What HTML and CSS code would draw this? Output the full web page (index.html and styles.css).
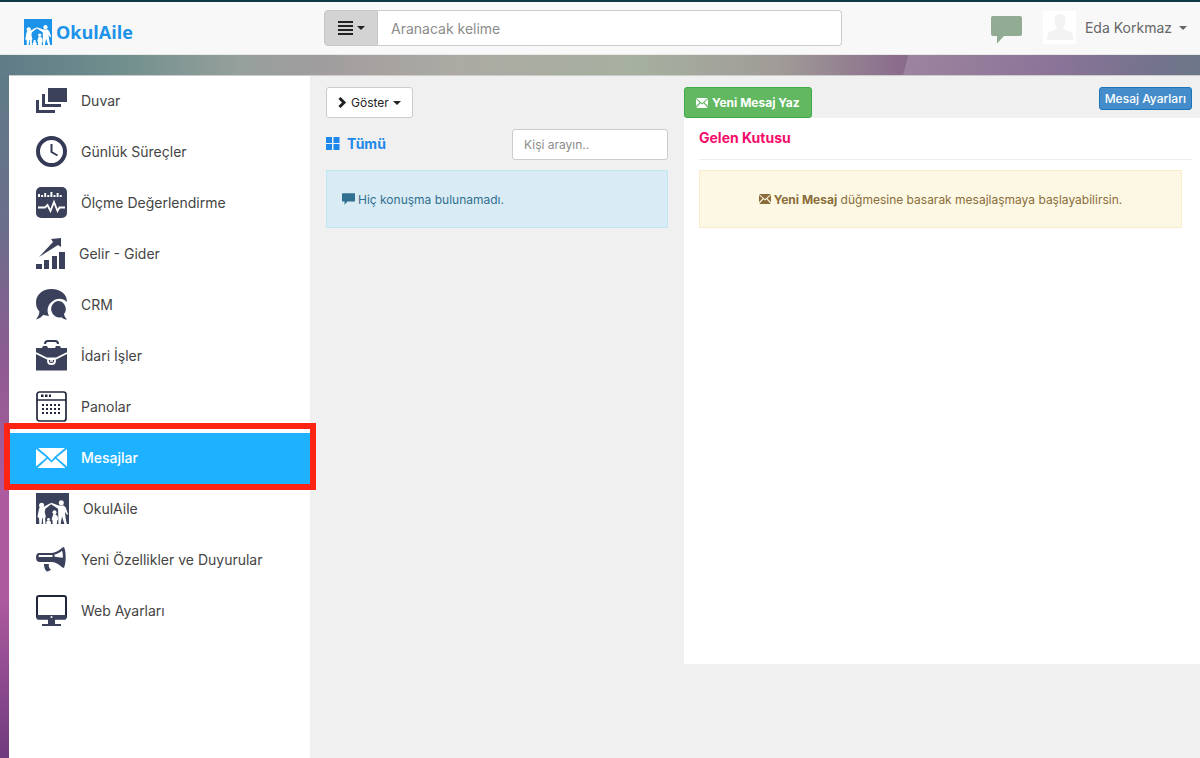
FILE: index.html
```html
<!DOCTYPE html>
<html lang="tr">
<head>
<meta charset="utf-8">
<meta name="viewport" content="width=device-width, initial-scale=1">
<title>OkulAile - Mesajlar</title>
<link rel="stylesheet" href="styles.css">
</head>
<body>
<svg class="defs" aria-hidden="true">
  <symbol id="family" viewBox="0 0 33 31">
    <path class="family-bg" d="M0 0h33v31H0z"/>
    <g fill="#fff">
      <circle cx="5.600" cy="12.200" r="2.500"/>
      <path d="M3.500 14.200 7.400 14l6.800-3.800.9 1-5.700 4.600-.7 3.200 1.300 5.200-.9.400L9.500 31H7.200l-.5-6h-.6l-.5 6H3.300l-.3-6.200-1.600-.5 1-5.500z"/>
      <circle cx="25.300" cy="9.800" r="2.500"/>
      <path d="m14.300 10.800 1-1 7.400 2.800h5l2 1.800 2.300 6.600-.8 1-2.200-3.300.5 5.500L30.800 31h-2.400l-2.400-7.500L24.600 31h-2.200l-.3-15.300z"/>
      <circle cx="18.500" cy="19.200" r="2"/>
      <path d="m17.300 21 2.500.2 2 2.200.2 3.600-.8.300-.4 3.700h-4.100l-.3-3.900-.8-.7z"/>
      <circle cx="12.500" cy="26.300" r="1.400"/>
      <path d="M11.400 27.500h2.300l1.200 1.500v2h-4.600v-2z"/>
    </g>
  </symbol>
  <symbol id="envelope" viewBox="0 0 12 10">
    <path fill="currentColor" d="M.2 0h11.600L6 5.300zM0 1.100 3.600 4.400 0 8.200zM12 1.100v7.100L8.400 4.400zM.2 10l4.200-4.800L6 6.600l1.600-1.400L11.800 10z"/>
  </symbol>
  <symbol id="bubble" viewBox="0 0 31 28">
    <path fill="currentColor" d="M2 0h27a2 2 0 0 1 2 2v16a2 2 0 0 1-2 2H13l-7 7.500V20H2a2 2 0 0 1-2-2V2a2 2 0 0 1 2-2z"/>
  </symbol>
</svg>

<header class="topbar">
  <a class="brand" href="#"><svg class="brand-mark" viewBox="0 0 33 31" preserveAspectRatio="none" aria-hidden="true"><use href="#family"/></svg><span>OkulAile</span></a>
  <form class="search">
    <button class="search-menu" type="button" aria-label="Arama seçenekleri">
      <svg width="15" height="14" viewBox="0 0 15 14" aria-hidden="true"><path d="M0 1h15M0 5h15M0 9h15M0 13h15" stroke="#222" stroke-width="2"/></svg><span class="caret"></span>
    </button>
    <input class="search-input" type="text" placeholder="Aranacak kelime" aria-label="Aranacak kelime">
  </form>
  <div class="user-area">
    <a class="notify" href="#" aria-label="Bildirimler"><svg width="31" height="28" aria-hidden="true"><use href="#bubble"/></svg></a>
    <a class="user" href="#">
      <svg class="avatar" viewBox="0 0 33 33" aria-hidden="true"><path fill="#f3f3f3" d="M4 29v-4c0-3 2-4 5-5l4-2c1-.5.600-2 0-3-1.500-1.500-1.500-3-1.500-6C11.500 5 13.500 3 17 3s5.500 2 5.500 6c0 3 0 4.500-1.500 6-.6 1-1 2.500 0 3l4 2c3 1 5 2 5 5v4z"/></svg>
      <span>Eda Korkmaz</span><span class="caret"></span>
    </a>
  </div>
</header>

<div class="shell">
  <nav class="sidebar">
    <a class="item" href="#"><svg width="31" height="31" viewBox="0 0 31 31" aria-hidden="true"><path class="ink" d="M12 3h19v14H12zM6 9h3v10h16v3H6zM0 15h3v10h16v3H0z"/></svg><span>Duvar</span></a>
    <a class="item" href="#"><svg width="31" height="31" viewBox="0 0 31 31" aria-hidden="true"><circle class="line" cx="15.500" cy="15.500" r="13.500" stroke-width="4"/><path class="line" d="M15.500 8v8l6 3.500" stroke-width="2"/></svg><span>Günlük Süreçler</span></a>
    <a class="item" href="#"><svg width="31" height="31" viewBox="0 0 31 31" aria-hidden="true"><rect class="ink" width="31" height="31" rx="5"/><path d="M3 10V7M6.100 10V8M9.200 10V6M12.300 10V8M15.400 10V5M18.500 10V8M21.600 10V6M24.700 10V8" stroke="#fff" stroke-width="2"/><path d="M2 20.500h7l2.500-2.500 3 6 3.500-9 3.500 9 2-3.500H29" fill="none" stroke="#fff" stroke-width="1.800"/></svg><span>Ölçme Değerlendirme</span></a>
    <a class="item" href="#"><svg width="29" height="31" viewBox="0 0 29 31" aria-hidden="true"><path class="ink" d="M0 26h6v5H0zM8 22h5v9H8zM16 18h5v13h-5zM23 14h6v17h-6zM3 19 17 4l-2-3 10-1v9l-3-2z"/></svg><span>Gelir - Gider</span></a>
    <a class="item" href="#"><svg width="31" height="31" viewBox="0 0 31 31" aria-hidden="true"><path class="ink" d="M15.500 0C25 0 31 5.500 31 13c-4-4-10-4-14-1-5 3-7 9-4 15-2 0-4-.5-5.500-1.200C5.500 28 3 30 0 30.500 2 28 3.500 25 3.400 22.500 1 20 0 17 0 13.500 0 6 6 0 15.500 0z"/><path class="ink" d="M21.500 12a8 8 0 0 1 6.500 13c.3 2 1.500 4 3 5.500-2 0-4-.8-5.500-2.300A8.200 8.200 0 1 1 21.500 12z"/></svg><span>CRM</span></a>
    <a class="item" href="#"><svg width="31" height="31" viewBox="0 0 31 31" aria-hidden="true"><path class="line" d="M9 4c0-2 1-3 3-3h7c2 0 3 1 3 3" stroke-width="2"/><path class="ink" d="M0 8h6l1-2h4l1 2h7l1-2h4l1 2h6v22.500H0z"/><path d="m0 13 12 6h7l12-6M12 18.500h7v2.500a3 3 0 0 1-3 3h-1a3 3 0 0 1-3-3z" fill="none" stroke="#fff" stroke-width="1.800"/><path d="M14 21h3" stroke="#fff" stroke-width="1.500"/></svg><span>İdari İşler</span></a>
    <a class="item" href="#"><svg width="31" height="31" viewBox="0 0 31 31" aria-hidden="true"><rect class="line frame" x="1" y="1" width="29" height="29" rx="2.500" stroke-width="1.700"/><path class="line frame" d="M1 9h29" stroke-width="1.500"/><path class="line frame" d="M5 4.800h10" stroke-width="2.400" stroke-dasharray="2.500 1.500"/><path class="line frame" d="M6 14h18M6 18h18M6 22h18" stroke-width="2" stroke-dasharray="2 2"/></svg><span>Panolar</span></a>
    <a class="item active" href="#" aria-current="page"><svg width="31" height="20" viewBox="0 0 31 20" aria-hidden="true"><path fill="#fff" d="M2 0h27L19 8.500l-3.500 4L12 8.500zM0 1l10.500 8.600L0 18.500zM31 1v17.500L20.500 9.600zM1.500 20l10-9.300 4 3.800 4-3.800 10 9.300z"/></svg><span>Mesajlar</span><i class="highlight"></i></a>
    <a class="item" href="#"><svg width="33" height="31" viewBox="0 0 33 31" aria-hidden="true"><use href="#family"/></svg><span>OkulAile</span></a>
    <a class="item" href="#"><svg width="31" height="31" viewBox="0 0 31 31" aria-hidden="true"><path class="ink" d="M3 9h13c4-.5 8-3 10.500-5.500L28 3c2 4 2.500 15 0 21l-2-.8c-3-3-6-4.700-10-5.200H4C1 18 0 16 0 13.500S1 9 3 9z"/><path d="M3 11h13.500v2H2.500zM18.500 10.500c3-.7 5.500-2 7.500-3.800.8 2 1 4.500.8 7l-8.300-1z" fill="#fff"/><path class="ink" d="M8 20h5c-.8 2 0 4 2 6l-3.500 1.500C9 27 8 23 8 20z"/></svg><span>Yeni Özellikler ve Duyurular</span></a>
    <a class="item" href="#"><svg width="31" height="31" viewBox="0 0 31 31" aria-hidden="true"><rect class="line frame" x="1" y="1" width="29" height="22.500" rx="2" stroke-width="2"/><path class="ink" d="M1 20h29v4.500H1zM12 24h7v5h6v2H6v-2h6z"/><circle cx="15.500" cy="22" r="1" fill="#fff"/></svg><span>Web Ayarları</span></a>
  </nav>

  <main class="workspace">
    <section class="people">
      <button class="btn show" type="button"><svg width="9" height="11" viewBox="0 0 9 11" aria-hidden="true"><path d="m1.500 1 4.500 4.500L1.500 10" fill="none" stroke="#222" stroke-width="3"/></svg><span>Göster</span><span class="caret"></span></button>
      <div class="filter">
        <h2 class="all"><svg width="14" height="13" viewBox="0 0 14 13" aria-hidden="true"><path fill="currentColor" d="M0 0h6v6H0zM7.500 0h6v6h-6zM0 7h6v6H0zM7.500 7h6v6h-6z"/></svg><span>Tümü</span></h2>
        <input class="people-search" type="text" placeholder="Kişi arayın.." aria-label="Kişi arayın">
      </div>
      <p class="alert info"><svg width="13" height="12" aria-hidden="true"><use href="#bubble"/></svg><span>Hiç konuşma bulunamadı.</span></p>
    </section>
    <section class="messages">
      <div class="actions">
        <button class="btn compose" type="button"><svg width="12" height="10" aria-hidden="true"><use href="#envelope"/></svg><span>Yeni Mesaj Yaz</span></button>
        <button class="btn settings" type="button">Mesaj Ayarları</button>
      </div>
      <div class="inbox">
        <h1 class="inbox-title">Gelen Kutusu</h1>
        <p class="alert warning"><svg width="12" height="10" aria-hidden="true"><use href="#envelope"/></svg><span><strong>Yeni Mesaj</strong> düğmesine basarak mesajlaşmaya başlayabilirsin.</span></p>
      </div>
    </section>
  </main>
</div>
</body>
</html>
```

FILE: styles.css
```css
* { box-sizing: border-box; }

body {
  margin: 0;
  min-height: 100vh;
  display: flex;
  flex-direction: column;
  font-family: Inter, "Liberation Sans", sans-serif;
  font-size: 12px;
  color: #444;
  background:
    linear-gradient(105deg, transparent 877px, rgba(255, 255, 255, .16) 878px, transparent 1120px) 0 55px / 100% 21px no-repeat,
    linear-gradient(90deg, #5f7b87 0, #708f8d 10%, #96a09c 20%, #a19d9e 27%, #acaaa3 38%, #a6b0a0 53%, #a09b97 65%, #8a6c8c 75%, #826a91 88%, #6d7789 100%) 0 55px / 100% 21px no-repeat,
    linear-gradient(#5f7b87 75px, #6b6d8b 230px, #8d5b91 360px, #ad5a9f 490px, #ad5a9f 600px, #703a7e 758px);
}

a { color: inherit; text-decoration: none; }
svg { flex: none; }
button, input { font: inherit; }
.defs { position: absolute; width: 0; height: 0; }
.ink { fill: #3b415a; }
.line { fill: none; stroke: #343a55; }
.frame { stroke: #22263d; }
.family-bg { fill: var(--family, #3b415a); }

.caret {
  border: 4px solid transparent;
  border-top-color: currentColor;
  border-bottom: 0;
}

.topbar {
  display: grid;
  grid-template-columns: 300px minmax(0, 518px) 1fr;
  align-items: start;
  height: 55px;
  padding: 8px 13px 0 24px;
  background: #f8f8f8;
  border-top: 2px solid #0d3a45;
  border-bottom: 1px solid #e7e7e7;
}

.brand {
  --family: #1c92e8;
  display: flex;
  align-items: center;
  gap: 4px;
  height: 44px;
  font-family: "Open Sans", sans-serif;
  font-size: 18px;
  font-weight: 700;
  color: #1c92e8;
}
.brand-mark { width: 28px; height: 26px; }

.search { display: flex; height: 36px; }
.search-menu {
  display: flex;
  align-items: center;
  justify-content: center;
  gap: 4px;
  width: 54px;
  padding: 0;
  color: #222;
  background: #d3d3d3;
  border: 1px solid #c6c6c6;
  border-radius: 4px 0 0 4px;
}
.search-input {
  flex: 1;
  min-width: 0;
  padding: 0 13px;
  font-size: 14px;
  background: #fff;
  border: 1px solid #ccc;
  border-left: 0;
  border-radius: 0 4px 4px 0;
}
::placeholder { color: #8c8c8c; opacity: 1; }

.user-area { display: flex; justify-content: flex-end; gap: 21px; }
.notify { padding-top: 6px; color: #91ac92; }
.user { display: flex; align-items: center; font-size: 14px; color: #666; height: 35px; }
.avatar { width: 33px; height: 33px; margin-right: 9px; background: #fff; }
.user .caret { margin-left: 7px; }

.shell {
  display: flex;
  flex: 1;
  margin: 20px 0 0 9px;
  border-top: 1px solid #ccc;
  background: #f0f0f0;
}

.sidebar {
  width: 301px;
  flex: none;
  background: #fff;
}
.item {
  position: relative;
  display: flex;
  align-items: center;
  gap: 14px;
  height: 51px;
  padding: 0 0 2px 27px;
  font-size: 14px;
}
.active { color: #fff; background: #1eb1ff; font-weight: 500; }
.highlight {
  position: absolute;
  inset: -10px -6px -6px -5px;
  border: 6px solid #fd2414;
  pointer-events: none;
}

.workspace {
  flex: 1;
  min-width: 0;
  display: grid;
  grid-template-columns: 374fr 516fr;
  padding-top: 11px;
}
.people { padding: 0 16px; }

.btn {
  display: inline-flex;
  align-items: center;
  justify-content: center;
  gap: 4px;
  height: 31px;
  padding: 0 11px;
  border: 1px solid #ccc;
  border-radius: 3px;
  background: #fff;
  color: #222;
}
.filter {
  display: flex;
  justify-content: space-between;
  align-items: center;
  margin-top: 11px;
}
.all {
  display: flex;
  align-items: center;
  gap: 7px;
  margin: 0 0 3px;
  font-size: 14px;
  color: #1c88ea;
}
.people-search {
  width: 156px;
  height: 31px;
  padding: 0 11px;
  background: #fff;
  border: 1px solid #ccc;
  border-radius: 3px;
}

.alert {
  display: flex;
  align-items: center;
  gap: 3px;
  min-height: 58px;
  margin: 10px 0 0;
  padding: 15px;
  border: 1px solid;
}
.info { color: #31708f; background: #d9ebf5; border-color: #bce8f1; }
.warning {
  justify-content: center;
  margin-right: 10px;
  color: #8a6d3b;
  background: #fcf8e3;
  border-color: #faebcc;
}

.actions {
  display: flex;
  align-items: flex-start;
  justify-content: space-between;
  padding-right: 8px;
}
.compose { color: #fff; font-weight: 700; background: #61b861; border-color: #3fab48; }
.settings {
  height: 23px;
  padding: 0 5px;
  color: #fff;
  font-weight: 500;
  background: #458dca;
  border-color: #1b75ba;
}
.inbox { min-height: 546px; padding: 0 8px 0 15px; background: #fff; }
.inbox-title {
  margin: 0;
  padding: 10px 0 11px;
  font-size: 14px;
  font-weight: 700;
  line-height: 20px;
  color: #f50a6c;
  border-bottom: 1px solid #eee;
}
```
